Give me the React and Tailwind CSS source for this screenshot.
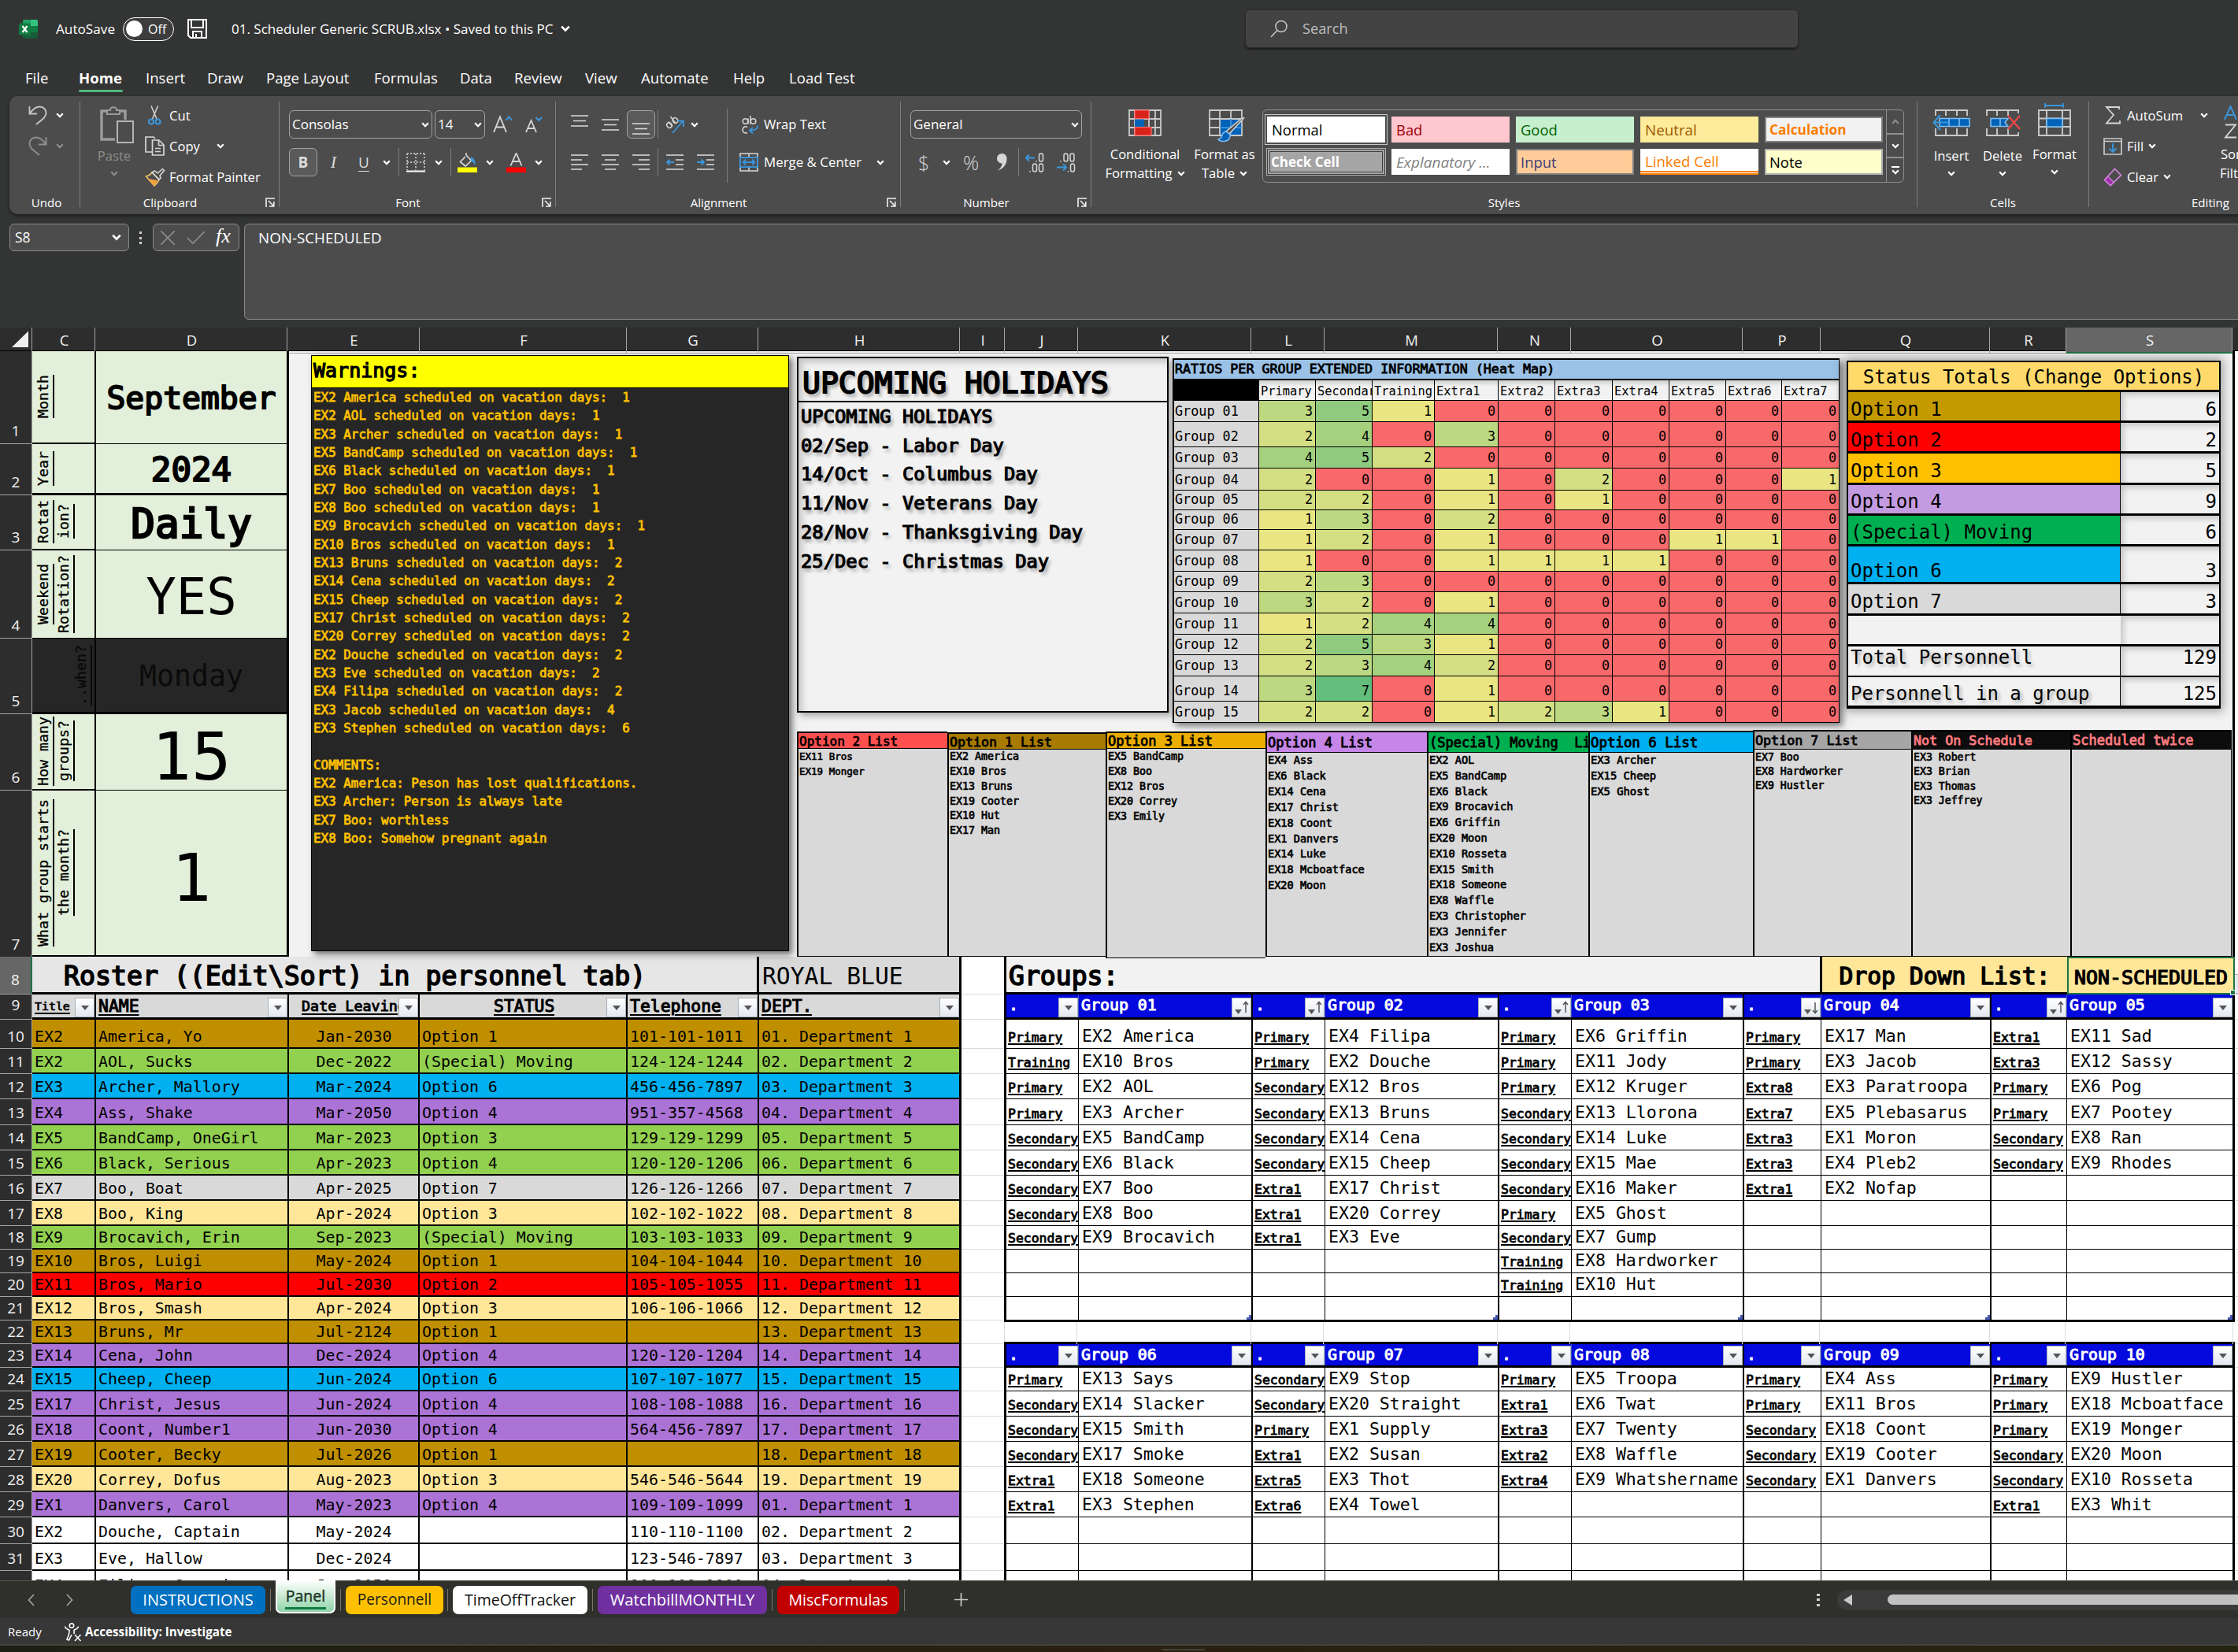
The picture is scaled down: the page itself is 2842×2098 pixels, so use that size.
import React from "react";

const UI = "font-['Open_Sans','Noto_Sans',sans-serif]";
const MONO = "font-['DejaVu_Sans_Mono','Liberation_Mono',monospace]";
/* A bold between the regular and bold weights of the sheet's font. */
const SEMI = "[-webkit-text-stroke-width:0.05em]";

/* ---------- icons ---------- */

const Chevron = ({ className = "" }) => (
  <svg className={`shrink-0 ${className}`} width="10" height="7" viewBox="0 0 10 7" fill="none" stroke="currentColor" strokeWidth="2.200">
    <path d="M1.2 1.2 5 5.2 8.8 1.2" />
  </svg>
);

const ExcelLogo = () => (
  <svg width="24" height="24" viewBox="0 0 24 24" className="shrink-0">
    <path d="M5 1.5A1.5 1.5 0 0 1 6.500 0H15v8H5z" fill="#21a366" />
    <path d="M15 0h7.500A1.500 1.500 0 0 1 24 1.500V8h-9z" fill="#33c481" />
    <path d="M15 8h9v8h-9z" fill="#107c41" />
    <path d="M5 8h10v8H5z" fill="#107c41" />
    <path d="M5 16h19v6.500a1.500 1.500 0 0 1-1.500 1.500h-16A1.500 1.500 0 0 1 5 22.500z" fill="#185c37" />
    <rect x="0" y="4.500" width="15" height="15" rx="1.500" fill="#107c41" />
    <path d="M4.500 8 10.500 16M10.500 8 4.500 16" stroke="#fff" strokeWidth="2.200" />
  </svg>
);

const SaveIcon = () => (
  <svg width="25" height="25" viewBox="0 0 25 25" fill="none" stroke="#fff" strokeWidth="2" className="shrink-0">
    <path d="M1 1h23v23H4l-3-3z" />
    <path d="M5 1v10h15V1M7 24v-8h11v8M11 24v-5" />
  </svg>
);

const SearchIcon = () => (
  <svg width="23" height="23" viewBox="0 0 23 23" fill="none" stroke="#c4c4c4" strokeWidth="1.6">
    <circle cx="14" cy="8.500" r="7" />
    <path d="M9 13.500 1 22" />
  </svg>
);

const UndoIcon = ({ flip }) => (
  <svg width="24" height="25" viewBox="0 0 24 25" fill="none" stroke="currentColor" strokeWidth="1.900" className={flip ? "-scale-x-100 shrink-0" : "shrink-0"}>
    <path d="M1.500 1v9.500H11M2 10C6 4 10 1.500 14.500 1.500c5 0 8 4 8 8 0 3-1.500 5-4 7.500L10 24" />
  </svg>
);

const PasteIcon = () => (
  <svg width="44" height="47" viewBox="0 0 44 47" fill="none" stroke="#9b9b9b" strokeWidth="2" className="-mr-[7px] shrink-0">
    <path d="M10 6H2v36h17" strokeWidth="3.500" />
    <path d="M24 6h8v11" strokeWidth="3.500" />
    <path d="M9 10V5h4c0-5 8-5 8 0h4v5z" />
    <rect x="22" y="19" width="20" height="27" stroke="#b4b4b4" />
  </svg>
);

const CutIcon = () => (
  <svg width="24" height="25" viewBox="0 0 24 25" fill="none" strokeWidth="1.500">
    <path d="M8 0.500 15 17M16.500 0.500 9.500 17" stroke="#d6d6d6" />
    <circle cx="8" cy="20.500" r="3" stroke="#3a96dd" strokeWidth="2" />
    <circle cx="16.500" cy="20.500" r="3" stroke="#3a96dd" strokeWidth="2" />
  </svg>
);

const CopyIcon = () => (
  <svg width="26" height="25" viewBox="0 0 26 25" fill="none" stroke="#d6d6d6" strokeWidth="1.700">
    <path d="M9 20H1V1h10l2 2" />
    <path d="M9.500 5H18l6 6v13H9.500zM17.500 5v6.500H24M13 15.500h7M13 19.500h7" />
  </svg>
);

const PainterIcon = () => (
  <svg width="26" height="24" viewBox="0 0 26 24" fill="none">
    <path d="m1.500 11 10.500 12c2-2 5-5 6-8l-9-9C7 9 4 10.500 1.500 11z" stroke="#f4c46c" strokeWidth="1.600" />
    <path d="m4 14 12 2c-1.500 3-3 5-4.500 6.500z" fill="#f2a33a" />
    <path d="m9 6 3.500-2 3.500 3L22.500 1.500 24.500 3.500 19 10l1 3-2 2z" stroke="#d6d6d6" strokeWidth="1.600" />
  </svg>
);

const Launcher = () => (
  <svg width="12" height="12" viewBox="0 0 12 12" fill="none" stroke="#f0f0f0" strokeWidth="1.600">
    <path d="M1 12V1h11M4 4l6 6M10.800 5v6H5" />
  </svg>
);

const GrowFont = ({ down }) => (
  <svg width={down ? 22 : 26} height="24" viewBox={down ? "0 0 22 24" : "0 0 26 24"} fill="none" className="shrink-0">
    {down ? (
      <>
        <path d="M1 22 7.500 7 14 22M3 17h9" stroke="#d6d6d6" strokeWidth="1.800" />
        <path d="m13.500 3 3.700 4 3.700-4" stroke="#3a96dd" strokeWidth="2" />
      </>
    ) : (
      <>
        <path d="M1 22 9 2.500 17 22M4 15.500h10" stroke="#d6d6d6" strokeWidth="1.900" />
        <path d="m16.500 6.500 3.700-4 3.700 4" stroke="#3a96dd" strokeWidth="2" />
      </>
    )}
  </svg>
);

const BordersIcon = () => (
  <svg width="24" height="25" viewBox="0 0 24 25" fill="none" className="shrink-0">
    <path d="M1 1h22M1 12h22M1 1v21M12 1v21M23 1v21" stroke="#d6d6d6" strokeWidth="1.500" strokeDasharray="2 2" />
    <path d="M0 23.500h24" stroke="#fff" strokeWidth="2" />
  </svg>
);

const FillIcon = () => (
  <svg width="26" height="25" viewBox="0 0 26 25" fill="none" className="shrink-0">
    <path d="M10 5 3.500 11.500 10 17l7.500-7L11 3V0" stroke="#d6d6d6" strokeWidth="1.700" />
    <path d="M17 5c4 2 6 5 5.500 11-1.500-2-2.500-4-5.500-6z" fill="#3a96dd" />
    <rect x="0" y="18.500" width="25" height="6.500" fill="#ffff00" />
  </svg>
);

const FontColorIcon = () => (
  <svg width="25" height="25" viewBox="0 0 25 25" fill="none" className="shrink-0">
    <path d="M5.500 16.500 12.500 0.500 19.500 16.500M8 11h9" stroke="#d6d6d6" strokeWidth="1.800" />
    <rect x="0" y="18.500" width="25" height="6.500" fill="#ff0000" />
  </svg>
);

const Lines = ({ d, h = 20, className = "" }) => (
  <svg width="22" height={h} viewBox={`0 0 22 ${h}`} fill="none" stroke="#dcdcdc" strokeWidth="1.700" className={`shrink-0 ${className}`}>
    <path d={d} />
  </svg>
);

const IndentIcon = ({ right }) => (
  <svg width="23" height="20" viewBox="0 0 23 20" fill="none" strokeWidth="1.700" className="shrink-0">
    <path d="M0 1h22M12 7h10M12 13h10M0 19h22" stroke="#dcdcdc" />
    <path d={right ? "M0 10h9M5.500 6.500 9 10l-3.500 3.500" : "M1 10h9M4.500 6.500 1 10l3.500 3.500"} stroke="#3a96dd" strokeWidth="1.900" />
  </svg>
);

const OrientIcon = () => (
  <svg width="24" height="24" viewBox="0 0 24 24" fill="none" className="shrink-0">
    <g stroke="#d6d6d6" strokeWidth="1.500">
      <ellipse cx="5" cy="13" rx="3" ry="3.500" transform="rotate(-40 5 13)" />
      <path d="m4 8.500 5 6" />
      <ellipse cx="12.500" cy="7" rx="3" ry="3.500" transform="rotate(-40 12.500 7)" />
      <path d="m6.500 2 6 8" />
    </g>
    <path d="M9 23 22 8M15.500 7.500H23V15" stroke="#3a96dd" strokeWidth="1.800" />
  </svg>
);

const WrapIcon = () => (
  <svg width="24" height="25" viewBox="0 0 24 25" fill="none" className="shrink-0" strokeWidth="1.600">
    <g stroke="#d6d6d6">
      <circle cx="7.500" cy="8" r="3.300" />
      <path d="M11 4.500v7M14 1v10.500" />
      <circle cx="17.500" cy="8" r="3.300" />
      <path d="M10 15.500c-3-2-6 .5-6 3.500s3 5 6 3.500" />
    </g>
    <path d="M23 13.500c0 4-2 6-9.500 6M17 16l-4 3.500 4 4" stroke="#3a96dd" strokeWidth="2" />
  </svg>
);

const MergeIcon = () => (
  <svg width="24" height="24" viewBox="0 0 24 24" fill="none" className="shrink-0">
    <path d="M1 1h22v22H1zM12 1v5M12 18v5" stroke="#d6d6d6" strokeWidth="1.600" />
    <rect x="1" y="6" width="22" height="12" fill="#4c4c4c" stroke="#3a96dd" strokeWidth="1.900" />
    <path d="M4.500 12h15M8 8.500 4.500 12 8 15.500M16 8.500l3.500 3.500-3.500 3.500" stroke="#3a96dd" strokeWidth="1.800" />
  </svg>
);

const Decimals = ({ more }) => (
  <svg width="25" height="25" viewBox="0 0 25 25" fill="none" className="shrink-0">
    <path d={more ? "M1 6.500h11M5 2.500 1 6.500l4 4" : "M0 18.500h12M8 14.500l4 4-4 4"} stroke="#3a96dd" strokeWidth="2" />
    <g stroke="#d6d6d6" strokeWidth="1.500">
      {more ? (
        <>
          <path d="M14 10v1.500" />
          <rect x="17.500" y="1" width="5" height="10" rx="2.500" />
          <path d="M6 23v1.500" />
          <rect x="9.500" y="14" width="5" height="10" rx="2.500" />
          <rect x="17.500" y="14" width="5" height="10" rx="2.500" />
        </>
      ) : (
        <>
          <path d="M5 10v1.500" />
          <rect x="9" y="1" width="5" height="10" rx="2.500" />
          <rect x="17" y="1" width="5" height="10" rx="2.500" />
          <path d="M14.500 23v1.500" />
          <rect x="17.500" y="14" width="5" height="10" rx="2.500" />
        </>
      )}
    </g>
  </svg>
);

const CondIcon = () => (
  <svg width="42" height="34" viewBox="0 0 42 34" fill="none">
    <path d="M1 1h40v32H1zM1 12h40M1 23h40M8 1v32M26 1v32M34 1v32" stroke="#c9c9c9" strokeWidth="1.800" />
    <rect x="8" y="1" width="18" height="10.500" fill="#d9221a" stroke="#ff6b6b" strokeWidth="1.200" />
    <rect x="8" y="12.500" width="12" height="9.500" fill="#0063b8" />
    <rect x="8" y="22.500" width="21" height="10.500" fill="#d9221a" stroke="#ff6b6b" strokeWidth="1.200" />
  </svg>
);

const TableIcon = () => (
  <svg width="46" height="42" viewBox="0 0 46 42" fill="none">
    <rect x="14" y="12" width="28" height="21" fill="#0063b8" />
    <path d="M1 1h41v32H1zM1 12h41M1 23h13M14 1v32M28 1v11" stroke="#c9c9c9" strokeWidth="1.800" />
    <path d="M14 23h28M28 12v21" stroke="#4aa0e6" strokeWidth="1.500" />
    <path d="M44.500 11 26 31l-4-3L42 11z" fill="#4c4c4c" stroke="#d6d6d6" strokeWidth="1.500" />
    <path d="M22 28c-7 1-3 8-10 10 3 4 16 4 15-6z" fill="#0063b8" stroke="#7dbdf0" strokeWidth="1.500" />
  </svg>
);

const CellsIcon = ({ kind }) => (
  <svg width="48" height="42" viewBox="0 0 48 42" fill="none">
    {kind === "insert" && (
      <>
        <path d="M4 16V9h40v7M4 32v9h40v-9M17 9v7M31 9v7M17 32v9M31 32v9" stroke="#c9c9c9" strokeWidth="1.900" />
        <path d="M9 19.500h38v10H9zM21 19.500v10M34 19.500v10" fill="#0063b8" stroke="#7dbdf0" strokeWidth="1.600" />
        <path d="M1.500 24.500H21M10 15l-8.500 9.500L10 34" stroke="#3a96dd" strokeWidth="2" />
      </>
    )}
    {kind === "delete" && (
      <>
        <path d="M4 16V9h40v4M4 32v9h40v-4M17 9v7M31 9v7M17 32v9M31 32v9" stroke="#c9c9c9" strokeWidth="1.900" />
        <path d="M9 19.500h22l-4 5 4 5H9zM21 19.500v10" fill="#0063b8" stroke="#7dbdf0" strokeWidth="1.600" />
        <path d="M31 16l15 17M46 16 31 33" stroke="#f04747" strokeWidth="2.200" />
      </>
    )}
    {kind === "format" && (
      <>
        <path d="M4 9h40v32H4zM4 19.500h40M4 30h40M14 9v32M34 9v32" stroke="#c9c9c9" strokeWidth="1.900" />
        <rect x="14" y="19.500" width="20" height="10.500" fill="#0063b8" stroke="#7dbdf0" strokeWidth="1.600" />
        <path d="M12 3h23M12 0v6M35 0v6" stroke="#3a96dd" strokeWidth="1.800" />
      </>
    )}
  </svg>
);

const SigmaIcon = () => (
  <svg width="24" height="23" viewBox="0 0 24 23" fill="none" stroke="#d6d6d6" strokeWidth="1.800">
    <path d="M20 4V1H4l9 10L4 21.500h17V18" />
  </svg>
);

const FillDownIcon = () => (
  <svg width="24" height="22" viewBox="0 0 24 22" fill="none">
    <path d="M1 1h22v20H1zM1 4.500h22" stroke="#c9c9c9" strokeWidth="1.700" />
    <path d="M12 7v11M7.500 13.500 12 18l4.500-4.500" stroke="#3a96dd" strokeWidth="1.900" />
  </svg>
);

const EraserIcon = () => (
  <svg width="24" height="24" viewBox="0 0 24 24" fill="none">
    <path d="M1.500 15.500 14.500 1.500l8 8L9 22.500z" stroke="#cf86d9" strokeWidth="1.700" />
    <path d="M1.500 15.500 6 11l7.500 7.500-4.500 4z" fill="#a030ad" stroke="#cf86d9" strokeWidth="1.200" />
  </svg>
);

const AccessIcon = () => (
  <svg width="24" height="24" viewBox="0 0 24 24" fill="none" stroke="#fff" strokeWidth="1.600">
    <circle cx="10" cy="3.500" r="2.700" />
    <path d="M1.500 4.500C2 8 6 8 7 9.500c.5 3-1 7-3 11.500l2.500 1L10 15M18.500 4.500c-.5 3.500-4.500 3.500-5.500 5V14" />
    <path d="m14 15 7.500 8M21.500 15 14 23" />
  </svg>
);

/* ---------- title bar and tabs ---------- */

const TitleBar = () => (
  <div className="flex h-[73px] items-center text-[17.2px] text-white">
    <div className="ml-6"><ExcelLogo /></div>
    <span className="ml-[23px] w-[85px]">AutoSave</span>
    <div className="flex h-[30px] w-[65px] items-center rounded-full border-[1.5px] border-white bg-[#3d3d3d]">
      <span className="ml-[3px] h-[21px] w-[21px] rounded-full bg-white" />
      <span className="ml-[7px] text-[16px]">Off</span>
    </div>
    <div className="ml-[17px]"><SaveIcon /></div>
    <span className="ml-[31px] whitespace-nowrap text-[17.050px]">01. Scheduler Generic SCRUB.xlsx • Saved to this PC</span>
    <Chevron className="ml-[10px] scale-125" />
    <div className="absolute left-[1581px] top-[12px] flex h-[49px] w-[703px] items-center rounded-md border border-[#2a2a2a] bg-[#434343] shadow-[0_2px_2px_#1f1f1f]">
      <span className="ml-[31px]"><SearchIcon /></span>
      <span className="ml-[18px] text-[18.2px] text-[#bdbdbd]">Search</span>
    </div>
  </div>
);

const MENU = [
  ["File", "w-[68px]"], ["Home", "w-[85px]"], ["Insert", "w-[78px]"], ["Draw", "w-[75px]"],
  ["Page Layout", "w-[137px]"], ["Formulas", "w-[109px]"], ["Data", "w-[69px]"], ["Review", "w-[90px]"],
  ["View", "w-[71px]"], ["Automate", "w-[117px]"], ["Help", "w-[71px]"], ["Load Test", "w-[100px]"],
];

const MenuBar = () => (
  <div className="flex h-[49px] pl-8 pt-[12px] text-[18.6px] leading-[28px] text-white">
    {MENU.map(([label, w]) => (
      <div key={label} className={`${w} shrink-0 whitespace-nowrap`}>
        {label === "Home" ? (
          <span className="flex w-[57px] flex-col font-bold">
            {label}
            <span className="mt-[1px] h-[3px] w-[56px] rounded bg-[#54b87c]" />
          </span>
        ) : (
          label
        )}
      </div>
    ))}
  </div>
);

/* ---------- ribbon ---------- */

const Group = ({ label, w, launcher, pad = "", children }) => (
  <>
    <div className={`${w} flex shrink-0 flex-col`}>
      <div className="flex h-[122px]">{children}</div>
      <div className={`flex h-[26px] items-center text-[15.1px] ${pad}`}>
        <span className={`flex-1 text-center ${launcher ? "-ml-[7px]" : ""}`}>{label}</span>
        {launcher && <span className="mr-[5px]"><Launcher /></span>}
      </div>
    </div>
    <div className="mt-[7px] h-[134px] w-px shrink-0 bg-[#7d7d7d]" />
  </>
);

const Sep = ({ className = "" }) => <div className={`h-[36px] w-px shrink-0 bg-[#7d7d7d] ${className}`} />;

const Combo = ({ text, w }) => (
  <div className={`${w} flex h-[36px] shrink-0 items-center justify-between rounded-[6px] border border-[#a3a3a3] pl-[3px] pr-[3px] text-[17px]`}>
    {text}
    <Chevron />
  </div>
);

const SWATCHES = [
  [
    ["Normal", "bg-white text-black pl-[6px] text-[18.4px] ring-2 ring-[#4c4c4c] outline outline-offset-[2px] outline-[#c8c8c8]"],
    ["Bad", "bg-[#ffc7ce] text-[#9c0006] pl-[6px] text-[18.4px]"],
    ["Good", "bg-[#c6efce] text-[#006100] pl-[6px] text-[18.4px]"],
    ["Neutral", "bg-[#ffeb9c] text-[#9c5700] pl-[6px] text-[18.800px]"],
    ["Calculation", "bg-[#f2f2f2] text-[#fa7d00] font-bold text-[17.3px] border-2 border-[#7f7f7f] pl-[4px]"],
  ],
  [
    ["Check Cell", "bg-[#a5a5a5] text-white font-bold text-[17px] border-4 border-double border-[#3f3f3f] pl-[1px] outline outline-[#b0b0b0]"],
    ["Explanatory ...", "bg-white text-[#7f7f7f] italic pl-[6px] text-[19px]"],
    ["Input", "bg-[#ffcc99] text-[#3f3f76] border-2 border-[#7f7f7f] pl-[4px] text-[18.4px]"],
    ["Linked Cell", "bg-white text-[#fa7d00] border-b-[5px] border-double border-[#ff8001] pl-[6px] pt-[3px] text-[18.600px]"],
    ["Note", "bg-[#ffffcc] text-black border-2 border-[#b2b2b2] pl-[4px] text-[18.4px]"],
  ],
];

const BigButton = ({ icon, lines, w, dim }) => (
  <div className={`${w} flex shrink-0 flex-col items-center text-[16.6px] ${dim ? "text-[#8c8c8c]" : ""}`}>
    {icon}
    {lines}
  </div>
);

const Ribbon = () => (
  <div className="ml-[12px] flex h-[150px] w-[2990px] rounded-[10px] bg-[#4c4c4c] text-[16.6px] leading-[24px] text-white shadow-[0_2px_4px_#1c1c1c]">
    <Group label="Undo" w="w-[89px]" pad="pl-[5px]">
      <div className="pl-6 pt-[5px]">
        <div className="flex h-[39px] items-center text-[#c4c4c4]"><UndoIcon /><Chevron className="ml-[11px] text-white" /></div>
        <div className="flex h-[39px] items-center text-[#8f8f8f]"><UndoIcon flip /><Chevron className="ml-[11px]" /></div>
      </div>
    </Group>
    <Group label="Clipboard" w="w-[252px]" launcher>
      <BigButton w="ml-[20px] w-[46px] pt-[13px]" dim icon={<PasteIcon />} lines={<><span className="mt-[4px]">Paste</span><Chevron className="mt-[7px]" /></>} />
      <div className="ml-[16px] pt-[5px]">
        <div className="flex h-[39px] items-center"><span className="w-[31px]"><CutIcon /></span>Cut</div>
        <div className="flex h-[39px] items-center"><span className="w-[31px]"><CopyIcon /></span><span className="w-[60px]">Copy</span><Chevron /></div>
        <div className="flex h-[39px] items-center whitespace-nowrap"><span className="w-[31px]"><PainterIcon /></span>Format Painter</div>
      </div>
    </Group>
    <Group label="Font" w="w-[350px]" launcher>
      <div className="flex flex-col gap-3 pl-3 pt-[18px]">
        <div className="flex h-[36px] items-center">
          <Combo text="Consolas" w="w-[182px]" />
          <span className="w-[3px]" />
          <Combo text="14" w="w-[64px]" />
          <span className="ml-[10px]"><GrowFont /></span>
          <span className="ml-[15px]"><GrowFont down /></span>
        </div>
        <div className="flex h-[36px] items-center">
          <span className="flex h-[36px] w-[36px] items-center justify-center rounded-[6px] border border-[#a3a3a3] bg-[#5a5a5a] text-[19px] font-bold text-[#dcdcdc]">B</span>
          <span className="w-[41px] text-center font-['Liberation_Serif',serif] text-[22px] italic text-[#dcdcdc]">I</span>
          <span className="w-[36px] text-center text-[19px] text-[#dcdcdc] underline underline-offset-4">U</span>
          <Chevron className="ml-[6px]" />
          <Sep className="ml-[10px]" />
          <span className="ml-[9px]"><BordersIcon /></span>
          <Chevron className="ml-[12px]" />
          <Sep className="ml-[10px]" />
          <span className="ml-[8px]"><FillIcon /></span>
          <Chevron className="ml-[10px]" />
          <span className="ml-[16px]"><FontColorIcon /></span>
          <Chevron className="ml-[11px]" />
        </div>
      </div>
    </Group>
    <Group label="Alignment" w="w-[437px]" launcher>
      <div className="flex w-[217px] flex-col gap-3 pl-[19px] pt-[18px]">
        <div className="flex h-[36px] items-center">
          <Lines h={15} className="-mt-[10px]" d="M0 1h22M3 7.500h16M0 14h22" />
          <Lines h={15} className="ml-[17px]" d="M0 1h22M3 7.500h16M0 14h22" />
          <span className="ml-[10px] flex h-[36px] w-[36px] items-end justify-center rounded-[6px] border border-[#a3a3a3] bg-[#5a5a5a] pb-[4px]">
            <Lines h={15} d="M0 1h22M3 7.500h16M0 14h22" />
          </span>
          <Sep className="ml-[3px]" />
          <span className="ml-[9px]"><OrientIcon /></span>
          <Chevron className="ml-[8px]" />
        </div>
        <div className="flex h-[36px] items-center">
          <Lines d="M0 1h22M0 7h14M0 13h22M0 19h14" />
          <Lines className="ml-[17px]" d="M0 1h22M4 7h14M0 13h22M4 19h14" />
          <Lines className="ml-[17px]" d="M0 1h22M8 7h14M0 13h22M8 19h14" />
          <Sep className="ml-[10px]" />
          <span className="ml-[10px]"><IndentIcon /></span>
          <span className="ml-[16px]"><IndentIcon right /></span>
        </div>
      </div>
      <div className="mt-[16px] h-[94px] w-px bg-[#7d7d7d]" />
      <div className="flex flex-col gap-3 pl-[15px] pt-[18px]">
        <div className="flex h-[36px] items-center"><WrapIcon /><span className="ml-[7px]">Wrap Text</span></div>
        <div className="flex h-[36px] items-center"><MergeIcon /><span className="ml-[7px] w-[143px] text-[16.900px]">Merge &amp; Center</span><Chevron /></div>
      </div>
    </Group>
    <Group label="Number" w="w-[241px]" launcher>
      <div className="flex flex-col gap-3 pl-3 pt-[18px]">
        <Combo text="General" w="w-[218px]" />
        <div className="flex h-[36px] items-center text-[#d6d6d6]">
          <span className="ml-[10px] w-[31px] text-[25px] font-light">$</span>
          <Chevron className="text-white" />
          <span className="ml-[16px] w-[43px] text-[25px] font-light">%</span>
          <svg width="13" height="22" viewBox="0 0 13 22" className="shrink-0"><path d="M6 0a6 6 0 0 1 6.500 6.500C12.500 14 8 19.500 1 21.500c3.500-3 5.500-6 5.500-9A6 6 0 0 1 6 0z" fill="#d6d6d6" /></svg>
          <Sep className="ml-[14px]" />
          <span className="ml-[8px]"><Decimals more /></span>
          <span className="ml-[15px]"><Decimals /></span>
        </div>
      </div>
    </Group>
    <Group label="Styles" w="w-[1048px]">
      <BigButton w="ml-[13px] w-[110px] pt-[17px]" icon={<CondIcon />} lines={<><span className="mt-[11px]">Conditional</span><span className="flex items-center gap-[6px]">Formatting<Chevron /></span></>} />
      <BigButton w="ml-[4px] w-[84px] pt-[17px]" icon={<span className="ml-[6px] h-[34px]"><TableIcon /></span>} lines={<><span className="mt-[11px] whitespace-nowrap">Format as</span><span className="flex items-center gap-[6px]">Table<Chevron /></span></>} />
      <div className="ml-[6px] mt-[17px] flex h-[93px] w-[815px] rounded-[6px] border border-[#8f8f8f]">
        <div className="flex flex-col gap-2 pl-[5px] pt-[8px]">
          {SWATCHES.map((row, i) => (
            <div key={i} className="flex gap-2">
              {row.map(([name, cls]) => (
                <div key={name} className={`flex h-[33px] w-[150px] items-center whitespace-nowrap ${cls}`}>{name}</div>
              ))}
            </div>
          ))}
        </div>
        <div className="ml-auto flex w-[22px] flex-col items-center border-l border-[#8f8f8f]">
          <span className="flex h-[31px] w-full items-center justify-center border-b-2 border-[#8f8f8f] text-[#8f8f8f]"><Chevron className="rotate-180" /></span>
          <span className="flex h-[30px] w-full items-center justify-center border-b-2 border-[#8f8f8f]"><Chevron /></span>
          <span className="flex h-[30px] w-full flex-col items-center justify-center gap-[2px]"><span className="h-[2px] w-[10px] bg-white" /><Chevron /></span>
        </div>
      </div>
    </Group>
    <Group label="Cells" w="w-[217px]">
      <BigButton w="ml-[13px] w-[60px] pt-[9px]" icon={<CellsIcon kind="insert" />} lines={<><span className="mt-[13px]">Insert</span><Chevron className="mt-[7px]" /></>} />
      <BigButton w="ml-[5px] w-[60px] pt-[9px]" icon={<CellsIcon kind="delete" />} lines={<><span className="mt-[13px]">Delete</span><Chevron className="mt-[7px]" /></>} />
      <BigButton w="ml-[6px] w-[60px] pt-[9px]" icon={<CellsIcon kind="format" />} lines={<><span className="mt-[11px]">Format</span><Chevron className="mt-[7px]" /></>} />
    </Group>
    <Group label="Editing" w="w-[308px]">
      <div className="w-[167px] pl-[18px] pt-[5px]">
        <div className="flex h-[39px] items-center"><span className="w-[30px]"><SigmaIcon /></span><span className="w-[93px]">AutoSum</span><Chevron /></div>
        <div className="flex h-[39px] items-center"><span className="w-[30px]"><FillDownIcon /></span>Fill<Chevron className="ml-[6px]" /></div>
        <div className="flex h-[39px] items-center"><span className="w-[30px]"><EraserIcon /></span>Clear<Chevron className="ml-[6px]" /></div>
      </div>
      <div className="flex flex-col whitespace-nowrap pt-[12px]">
        <svg width="24" height="44" viewBox="0 0 24 44" fill="none" className="ml-[4px]" strokeWidth="1.900">
          <path d="M1 18 8.500 1 16 18M4 12h9" stroke="#3a96dd" />
          <path d="M2 24.500h13L2 40.500h14" stroke="#d6d6d6" />
        </svg>
        <span className="mt-[6px]">Sort &amp;</span>
        <span className="-ml-px">Filter</span>
      </div>
    </Group>
  </div>
);

/* ---------- formula bar ---------- */

const FormulaBar = () => (
  <div className="flex h-[144px] pl-[12px] pt-[12px] text-[18.8px] text-white">
    <div className="flex h-[35px] w-[152px] shrink-0 items-center justify-between rounded-[6px] border border-[#8a8a8a] bg-[#4c4c4c] pl-[6px] pr-[10px] text-[17.5px]">
      S8
      <Chevron className="scale-125" />
    </div>
    <div className="ml-[13px] mt-[10px] flex h-[16px] shrink-0 flex-col justify-between">
      <span className="h-[3px] w-[3px] bg-[#d0d0d0]" /><span className="h-[3px] w-[3px] bg-[#d0d0d0]" /><span className="h-[3px] w-[3px] bg-[#d0d0d0]" />
    </div>
    <div className="ml-[14px] flex h-[35px] w-[110px] shrink-0 items-center rounded-[6px] border border-[#8a8a8a] bg-[#4c4c4c]">
      <svg width="18" height="18" viewBox="0 0 18 18" className="ml-[9px] shrink-0" stroke="#8c8c8c" strokeWidth="1.700"><path d="M0 0 18 18M18 0 0 18" /></svg>
      <svg width="24" height="17" viewBox="0 0 24 17" className="ml-[15px] shrink-0" fill="none" stroke="#8c8c8c" strokeWidth="1.700"><path d="M1 9l7 7L23 1" /></svg>
      <span className="ml-[13px] pb-1 font-['Liberation_Serif',serif] text-[26px] italic leading-none">fx</span>
    </div>
    <div className="ml-[6px] h-[122px] w-[2600px] shrink-0 rounded-[6px] border border-[#8a8a8a] bg-[#4c4c4c] pl-[17px] pt-[3px] leading-[28px]">NON-SCHEDULED</div>
  </div>
);

/* ---------- column headings ---------- */

const COLS = "CDEFGHIJKLMNOPQRS".split("");

const ColumnHeadings = () => (
  <div className="grid h-[29px] grid-cols-[41px_80px_244px_168px_263px_167px_256px_57px_93px_220px_93px_220px_93px_218px_99px_215px_97px_211px_7px] bg-[#2d2d2d] text-[18.5px] leading-[31px] text-[#f2f2f2]">
    <div className="border-b border-r border-[#a5a5a5]">
      <svg width="40" height="28" viewBox="0 0 40 28"><path d="M36 4.500V25H15z" fill="#f0f0f0" /></svg>
    </div>
    {COLS.map((c) => (
      <div key={c} className={`border-r pl-[2px] text-center ${c === "S" ? "border-b-2 border-[#a5a5a5] border-b-[#217346] bg-[#666666]" : "border-b border-[#a5a5a5]"}`}>{c}</div>
    ))}
    <div className="border-b border-[#a5a5a5]" />
  </div>
);

/* ---------- settings column (rows 1-7) ---------- */

const MINT = "bg-[#e2efda]";
const DARK = "bg-[#262626]";

const SETTINGS = [
  { n: 1, h: "h-[118px]", bg: MINT, label: ["Month"], value: "September", vc: `text-[39.7px] ${SEMI} pt-[3px] border-b`, lc: "border-b-2" },
  { n: 2, h: "h-[65px]", bg: MINT, label: ["Year"], value: "2024", vc: `text-[42.500px] ${SEMI} pt-[5px] border-b-[3px]`, lc: "border-b-[3px]" },
  { n: 3, h: "h-[70px]", bg: MINT, label: ["Rotat", "ion?"], value: "Daily", vc: `text-[51px] ${SEMI} pt-[4px] border-b`, lc: "border-b-2" },
  { n: 4, h: "h-[112px]", bg: MINT, label: ["Weekend", "Rotation?"], value: "YES", vc: "text-[64px] pt-[7px] border-b", lc: "border-b" },
  { n: 5, h: "h-[96px]", bg: DARK, label: ["..when?"], value: "Monday", vc: "text-[36.500px] pt-[4px] border-b-[3px] text-[#0b0b0b]", lc: "border-b-[3px] justify-end pr-[4px] text-[#080808]" },
  { n: 6, h: "h-[97px]", bg: MINT, label: ["How many", "groups?"], value: "15", vc: "text-[84px] pt-[12px] border-b", lc: "border-b-2" },
  { n: 7, h: "h-[212px]", bg: MINT, label: ["What group starts", "the month?"], value: "1", vc: "text-[84px] pt-[12px] border-b-[3px]", lc: "border-b-[3px]" },
];

const Settings = () => (
  <div className="w-[367px] shrink-0">
    {SETTINGS.map((s) => (
      <div key={s.n} className={`${s.h} flex`}>
        <div className={`flex w-[41px] items-end justify-center border-b border-r border-[#a5a5a5] bg-[#2d2d2d] pb-[6px] text-[19px] leading-none text-[#f2f2f2] ${UI}`}>{s.n}</div>
        <div className={`flex w-[81px] items-center overflow-hidden border-r-2 border-black pl-px ${s.bg} ${s.lc}`}>
          <div className="flex">
            {s.label.map((t) => (
              <div key={t} className="flex w-[26px] shrink-0 rotate-180 items-center justify-center whitespace-nowrap text-[18.3px] leading-[26px] underline decoration-[1.5px] underline-offset-[3px] [-webkit-text-stroke-width:0.3px] [writing-mode:vertical-rl]">{t}</div>
            ))}
          </div>
        </div>
        <div className={`flex w-[245px] items-center justify-center border-r-[3px] border-black leading-none ${s.bg} ${s.vc}`}>{s.value}</div>
      </div>
    ))}
  </div>
);

/* ---------- panels ---------- */

const WARNINGS = [
  "EX2 America scheduled on vacation days:  1", "EX2 AOL scheduled on vacation days:  1", "EX3 Archer scheduled on vacation days:  1",
  "EX5 BandCamp scheduled on vacation days:  1", "EX6 Black scheduled on vacation days:  1", "EX7 Boo scheduled on vacation days:  1",
  "EX8 Boo scheduled on vacation days:  1", "EX9 Brocavich scheduled on vacation days:  1", "EX10 Bros scheduled on vacation days:  1",
  "EX13 Bruns scheduled on vacation days:  2", "EX14 Cena scheduled on vacation days:  2", "EX15 Cheep scheduled on vacation days:  2",
  "EX17 Christ scheduled on vacation days:  2", "EX20 Correy scheduled on vacation days:  2", "EX2 Douche scheduled on vacation days:  2",
  "EX3 Eve scheduled on vacation days:  2", "EX4 Filipa scheduled on vacation days:  2", "EX3 Jacob scheduled on vacation days:  4",
  "EX3 Stephen scheduled on vacation days:  6", "", "COMMENTS:", "EX2 America: Peson has lost qualifications.",
  "EX3 Archer: Person is always late", "EX7 Boo: worthless", "EX8 Boo: Somehow pregnant again",
];

const Warnings = () => (
  <div className="ml-[28px] mt-[5px] h-[757px] w-[607px] shrink-0 border border-black bg-[#262626] shadow-[4px_4px_8px_rgba(0,0,0,0.55)]">
    <div className={`h-[41px] border-b border-black bg-[#ffff00] pl-[2px] pt-[1px] text-[25px] leading-[36px] ${SEMI}`}>Warnings:</div>
    <div className={`whitespace-pre pl-[2px] text-[15.9px] leading-[23.34px] text-[#ffc000] ${SEMI}`}>
      {WARNINGS.map((w, i) => (
        <div key={i} className="h-[23.34px]">{w}</div>
      ))}
    </div>
  </div>
);

const HOLIDAYS = ["UPCOMING HOLIDAYS", "02/Sep - Labor Day", "14/Oct - Columbus Day", "11/Nov - Veterans Day", "28/Nov - Thanksgiving Day", "25/Dec - Christmas Day"];

const Holidays = () => (
  <div className="mt-[7px] h-[452px] w-[472px] border-2 border-black bg-[#f2f2f2] shadow-[4px_4px_8px_rgba(0,0,0,0.3),inset_5px_5px_8px_rgba(0,0,0,0.18)]">
    <div className={`h-[56px] border-b-2 border-black pl-[5px] pt-[7px] text-[38px] leading-[48px] [text-shadow:3px_4px_4px_rgba(0,0,0,0.4)] ${SEMI}`}>UPCOMING HOLIDAYS</div>
    <div className={`pl-[3px] text-[23.8px] leading-[36.7px] [text-shadow:3px_4px_4px_rgba(0,0,0,0.4)] ${SEMI}`}>
      {HOLIDAYS.map((h) => (
        <div key={h}>{h}</div>
      ))}
    </div>
  </div>
);

const HEAT = { 0: "bg-[#f8696b]", 1: "bg-[#e9e583]", 2: "bg-[#d3df82]", 3: "bg-[#bcd881]", 4: "bg-[#a5d17f]", 5: "bg-[#8fca7e]", 7: "bg-[#63be7b]" };
const RATIOS = [
  ["h-[27px]", "3510000000"], ["h-[32px]", "2403000000"], ["h-[27px]", "4520000000"], ["h-[28px]", "2001020001"], ["h-[25px]", "2201010000"],
  ["h-[25px]", "1302000000"], ["h-[26px]", "1201000110"], ["h-[27px]", "1001111000"], ["h-[26px]", "2300000000"], ["h-[27px]", "3201000000"],
  ["h-[27px]", "1244000000"], ["h-[26px]", "2531000000"], ["h-[27px]", "2342000000"], ["h-[32px]", "3701000000"], ["h-[27px]", "2201231000"],
];
const RATIO_GRID = "grid grid-cols-[108px_72px_72px_79px_81px_72px_73px_72px_72px_71px_73px]";

const Ratios = () => (
  <div className="ml-[5px] mt-[9px] h-[463px] w-[847px] border-2 border-r-[1px] border-black bg-white shadow-[4px_4px_8px_rgba(0,0,0,0.5)]">
    <div className={`h-[26px] border-b-2 border-black bg-[#9bc2e6] pl-px text-[16.700px] leading-[23px] ${SEMI}`}>RATIOS PER GROUP EXTENDED INFORMATION (Heat Map)</div>
    <div className={`${RATIO_GRID} h-[26px] bg-[#f2f2f2] text-[15.4px] leading-[29px] shadow-[inset_0_4px_5px_rgba(0,0,0,0.15)]`}>
      <div className="bg-black" />
      {["Primary", "Secondary", "Training", "Extra1", "Extra2", "Extra3", "Extra4", "Extra5", "Extra6", "Extra7"].map((t) => (
        <div key={t} className="overflow-hidden border-b border-r border-black pl-[2px]">{t}</div>
      ))}
    </div>
    {RATIOS.map(([h, values], i) => (
      <div key={i} className={`${RATIO_GRID} ${h} text-[16.800px] leading-none`}>
        <div className="flex items-end border-b border-r border-black bg-[#d9d9d9] pb-[4px] pl-px">{`Group ${String(i + 1).padStart(2, "0")}`}</div>
        {values.split("").map((v, j) => (
          <div key={j} className={`flex items-end justify-end border-b border-r border-black pb-[4px] pr-[3px] ${HEAT[v]}`}>{v}</div>
        ))}
      </div>
    ))}
  </div>
);

const STATUS = [
  ["Option 1", 6, "h-[39px] pb-[2px]", "bg-[#c49a00]"],
  ["Option 2", 2, "h-[39px] pb-[2px]", "bg-[#ff0000]"],
  ["Option 3", 5, "h-[40px] pb-[3px]", "bg-[#ffc000]"],
  ["Option 4", 9, "h-[39px] pb-[3px]", "bg-[#c39be0]"],
  ["(Special) Moving", 6, "h-[39px] pb-[3px]", "bg-[#00b050]"],
  ["Option 6", 3, "h-[48px] pb-[2px]", "bg-[#00b0f0]"],
  ["Option 7", 3, "h-[40px] pb-[3px]", "bg-[#d9d9d9]"],
  ["", "", "h-[39px]", ""],
  ["Total Personnell", 129, "h-[39px] pb-[11px]", ""],
  ["Personnell in a group", 125, "h-[38px] pb-[3px]", ""],
];

const StatusTotals = () => (
  <div className="ml-[9px] mt-[12px] h-[442px] w-[475px] border-2 border-black bg-[#f2f2f2] text-[24px] leading-none shadow-[0_0_12px_3px_rgba(0,0,0,0.35)]">
    <div className="h-[38px] border-b-[3px] border-black bg-[#ffda6a] text-center leading-[39px]">Status Totals (Change Options)</div>
    {STATUS.map(([name, n, h, bg], i) => (
      <div key={i} className={`flex ${h.split(" ")[0]}`}>
        <div className={`flex w-[346px] items-end border-black pl-[3px] ${h.split(" ")[1] || ""} ${i > 7 ? "border-b-2 [text-shadow:3px_3px_4px_rgba(0,0,0,0.3)]" : "border-b-[3px]"} ${i === 7 ? "" : "border-r"} ${bg}`}>{name}</div>
        <div className={`flex flex-1 items-end justify-end border-black pr-[3px] shadow-[inset_4px_4px_7px_rgba(0,0,0,0.18)] ${h.split(" ")[1] || ""} ${i > 7 ? "border-b-2" : "border-b-[3px]"}`}>{n}</div>
      </div>
    ))}
  </div>
);

const LISTS = [
  { t: "Option 2 List", box: "w-[191px] mt-[2px] h-[286px]", head: "h-[20px] bg-[#ff5050] text-[16px] leading-[21px]", body: "text-[12.5px] leading-[19px] pt-[0px]", items: ["EX11 Bros", "EX19 Monger"] },
  { t: "Option 1 List", box: "w-[201px] mt-[3px] h-[285px]", head: "h-[20px] bg-[#a87b00] text-[16.6px] leading-[21px]", body: "text-[13.3px] leading-[18.85px]", items: ["EX2 America", "EX10 Bros", "EX13 Bruns", "EX19 Cooter", "EX10 Hut", "EX17 Man"] },
  { t: "Option 3 List", box: "w-[203px] mt-[2px] h-[288px]", head: "h-[20px] bg-[#ebae00] text-[17px] leading-[21px]", body: "text-[13.3px] leading-[19px]", items: ["EX5 BandCamp", "EX8 Boo", "EX12 Bros", "EX20 Correy", "EX3 Emily"] },
  { t: "Option 4 List", box: "w-[205px] mt-px h-[287px]", head: "h-[26px] bg-[#c586e8] text-[17px] leading-[27px]", body: "text-[13.6px] leading-[19.9px]", items: ["EX4 Ass", "EX6 Black", "EX14 Cena", "EX17 Christ", "EX18 Coont", "EX1 Danvers", "EX14 Luke", "EX18 Mcboatface", "EX20 Moon"] },
  { t: "(Special) Moving  List", box: "w-[205px] mt-px h-[287px]", head: "h-[26px] bg-[#00b050] text-[17px] leading-[27px]", body: "text-[13.6px] leading-[19.8px]", items: ["EX2 AOL", "EX5 BandCamp", "EX6 Black", "EX9 Brocavich", "EX6 Griffin", "EX20 Moon", "EX10 Rosseta", "EX15 Smith", "EX18 Someone", "EX8 Waffle", "EX3 Christopher", "EX3 Jennifer", "EX3 Joshua"] },
  { t: "Option 6 List", box: "w-[209px] mt-px h-[287px]", head: "h-[26px] bg-[#00b0f0] text-[17.4px] leading-[27px]", body: "text-[13.8px] leading-[19.9px]", items: ["EX3 Archer", "EX15 Cheep", "EX5 Ghost"] },
  { t: "Option 7 List", box: "w-[201px] h-[288px]", head: "h-[23px] bg-[#a6a6a6] text-[16.7px] leading-[22px]", body: "text-[13.2px] leading-[18.2px] pt-px", items: ["EX7 Boo", "EX8 Hardworker", "EX9 Hustler"] },
  { t: "Not On Schedule", box: "w-[202px] h-[288px]", head: "h-[23px] bg-[#0d0d0d] text-[#ff7c80] text-[16.7px] leading-[22px]", body: "text-[13.2px] leading-[18.3px] pt-px", items: ["EX3 Robert", "EX3 Brian", "EX3 Thomas", "EX3 Jeffrey"] },
  { t: "Scheduled twice", box: "w-[205px] h-[288px]", head: "h-[23px] bg-[#0d0d0d] text-[#ff7c80] text-[17px] leading-[22px]", body: "", items: [] },
];

const Lists = () => (
  <div className="flex h-[288px]">
    {LISTS.map((l) => (
      <div key={l.t} className={`${l.box} shrink-0 overflow-hidden whitespace-pre border-2 border-r-0 border-b border-black bg-[#d9d9d9] last:border-r`}>
        <div className={`${l.head} ${SEMI} overflow-hidden border-b border-black pl-px`}>{l.t}</div>
        <div className={`${l.body} ${SEMI} pl-px`}>
          {l.items.map((i) => (
            <div key={i}>{i}</div>
          ))}
        </div>
      </div>
    ))}
  </div>
);

/* ---------- rows 8 and below ---------- */

const ROW_H = [
  [10, "h-[37px]"], [11, "h-[32px]"], [12, "h-[32px]"], [13, "h-[33px]"], [14, "h-[32px]"], [15, "h-[32px]"], [16, "h-[32px]"], [17, "h-[32px]"],
  [18, "h-[30px]"], [19, "h-[30px]"], [20, "h-[30px]"], [21, "h-[30px]"], [22, "h-[30px]"], [23, "h-[30px]"], [24, "h-[30px]"], [25, "h-[32px]"],
  [26, "h-[32px]"], [27, "h-[32px]"], [28, "h-[32px]"], [29, "h-[32px]"], [30, "h-[34px]"], [31, "h-[34px]"], [32, "h-[34px]"],
];

const GOLD = "bg-[#bf8f00]", GREEN = "bg-[#92d050]", BLUE = "bg-[#00b0f0]", PURPLE = "bg-[#ab73d5]", GRAY = "bg-[#d9d9d9]", CREAM = "bg-[#ffe699]", RED = "bg-[#ff0000]", WHITE = "bg-white";

const ROSTER = [
  [GOLD, "EX2", "America, Yo", "Jan-2030", "Option 1", "101-101-1011", "01. Department 1"],
  [GREEN, "EX2", "AOL, Sucks", "Dec-2022", "(Special) Moving", "124-124-1244", "02. Department 2"],
  [BLUE, "EX3", "Archer, Mallory", "Mar-2024", "Option 6", "456-456-7897", "03. Department 3"],
  [PURPLE, "EX4", "Ass, Shake", "Mar-2050", "Option 4", "951-357-4568", "04. Department 4"],
  [GREEN, "EX5", "BandCamp, OneGirl", "Mar-2023", "Option 3", "129-129-1299", "05. Department 5"],
  [GREEN, "EX6", "Black, Serious", "Apr-2023", "Option 4", "120-120-1206", "06. Department 6"],
  [GRAY, "EX7", "Boo, Boat", "Apr-2025", "Option 7", "126-126-1266", "07. Department 7"],
  [CREAM, "EX8", "Boo, King", "Apr-2024", "Option 3", "102-102-1022", "08. Department 8"],
  [GREEN, "EX9", "Brocavich, Erin", "Sep-2023", "(Special) Moving", "103-103-1033", "09. Department 9"],
  [GOLD, "EX10", "Bros, Luigi", "May-2024", "Option 1", "104-104-1044", "10. Department 10"],
  [RED, "EX11", "Bros, Mario", "Jul-2030", "Option 2", "105-105-1055", "11. Department 11"],
  [CREAM, "EX12", "Bros, Smash", "Apr-2024", "Option 3", "106-106-1066", "12. Department 12"],
  [GOLD, "EX13", "Bruns, Mr", "Jul-2124", "Option 1", "", "13. Department 13"],
  [PURPLE, "EX14", "Cena, John", "Dec-2024", "Option 4", "120-120-1204", "14. Department 14"],
  [BLUE, "EX15", "Cheep, Cheep", "Jun-2024", "Option 6", "107-107-1077", "15. Department 15"],
  [PURPLE, "EX17", "Christ, Jesus", "Jun-2024", "Option 4", "108-108-1088", "16. Department 16"],
  [PURPLE, "EX18", "Coont, Number1", "Jun-2030", "Option 4", "564-456-7897", "17. Department 17"],
  [GOLD, "EX19", "Cooter, Becky", "Jul-2026", "Option 1", "", "18. Department 18"],
  [CREAM, "EX20", "Correy, Dofus", "Aug-2023", "Option 3", "546-546-5644", "19. Department 19"],
  [PURPLE, "EX1", "Danvers, Carol", "May-2023", "Option 4", "109-109-1099", "01. Department 1"],
  [WHITE, "EX2", "Douche, Captain", "May-2024", "", "110-110-1100", "02. Department 2"],
  [WHITE, "EX3", "Eve, Hallow", "Dec-2024", "", "123-546-7897", "03. Department 3"],
  [WHITE, "EX4", "Filipa, Gearni", "Jan-2050", "", "100-100-1000", "04. Department 4"],
];

const G1 = [
  ["Group 01", "none", "up", ["Primary|EX2 America", "Training|EX10 Bros", "Primary|EX2 AOL", "Primary|EX3 Archer", "Secondary|EX5 BandCamp", "Secondary|EX6 Black", "Secondary|EX7 Boo", "Secondary|EX8 Boo", "Secondary|EX9 Brocavich"]],
  ["Group 02", "up", "none", ["Primary|EX4 Filipa", "Primary|EX2 Douche", "Secondary|EX12 Bros", "Secondary|EX13 Bruns", "Secondary|EX14 Cena", "Secondary|EX15 Cheep", "Extra1|EX17 Christ", "Extra1|EX20 Correy", "Extra1|EX3 Eve"]],
  ["Group 03", "up", "none", ["Primary|EX6 Griffin", "Primary|EX11 Jody", "Primary|EX12 Kruger", "Secondary|EX13 Llorona", "Secondary|EX14 Luke", "Secondary|EX15 Mae", "Secondary|EX16 Maker", "Primary|EX5 Ghost", "Secondary|EX7 Gump", "Training|EX8 Hardworker", "Training|EX10 Hut"]],
  ["Group 04", "down", "none", ["Primary|EX17 Man", "Primary|EX3 Jacob", "Extra8|EX3 Paratroopa", "Extra7|EX5 Plebasarus", "Extra3|EX1 Moron", "Extra3|EX4 Pleb2", "Extra1|EX2 Nofap"]],
  ["Group 05", "up", "none", ["Extra1|EX11 Sad", "Extra3|EX12 Sassy", "Primary|EX6 Pog", "Primary|EX7 Pootey", "Secondary|EX8 Ran", "Secondary|EX9 Rhodes"]],
];
const G2 = [
  ["Group 06", "none", "none", ["Primary|EX13 Says", "Secondary|EX14 Slacker", "Secondary|EX15 Smith", "Secondary|EX17 Smoke", "Extra1|EX18 Someone", "Extra1|EX3 Stephen"]],
  ["Group 07", "none", "none", ["Secondary|EX9 Stop", "Secondary|EX20 Straight", "Primary|EX1 Supply", "Extra1|EX2 Susan", "Extra5|EX3 Thot", "Extra6|EX4 Towel"]],
  ["Group 08", "none", "none", ["Primary|EX5 Troopa", "Extra1|EX6 Twat", "Extra3|EX7 Twenty", "Extra2|EX8 Waffle", "Extra4|EX9 Whatshername"]],
  ["Group 09", "none", "none", ["Primary|EX4 Ass", "Primary|EX11 Bros", "Secondary|EX18 Coont", "Secondary|EX19 Cooter", "Secondary|EX1 Danvers"]],
  ["Group 10", "none", "none", ["Primary|EX9 Hustler", "Primary|EX18 Mcboatface", "Primary|EX19 Monger", "Secondary|EX20 Moon", "Secondary|EX10 Rosseta", "Extra1|EX3 Whit"]],
];

const Filter = ({ sort = "none" }) => (
  <span className="ml-auto flex h-[25px] w-[25px] shrink-0 items-center justify-center self-end border border-[#a9b0ba] bg-gradient-to-b from-white to-[#e3e8ef]">
    {sort === "none" ? (
      <svg width="10" height="6"><path d="M0 0h10L5 6z" fill="#555" /></svg>
    ) : (
      <svg width="20" height="18" viewBox="0 0 20 18" fill="none">
        <path d="M1 11h9l-4.500 6z" fill="#555" />
        <path d={sort === "up" ? "M15 15V2M12 5l3-3.500L18 5" : "M15 2v13M12 12l3 3.500 3-3.500"} stroke="#555" strokeWidth="1.500" />
      </svg>
    )}
  </span>
);

const ROSTER_GRID = "grid grid-cols-[81px_245px_166px_264px_167px_257px]";
const HEADS = [
  ["Title", "text-[14.9px] pb-[6px]", ""],
  ["NAME", "text-[21.4px] pb-[4px]", ""],
  ["Date Leaving", "text-[18.4px] pb-[5px]", "pl-[13px]"],
  ["STATUS", "text-[21.4px] pb-[4px]", "pl-[91px]"],
  ["Telephone", "text-[21.4px] pb-[4px]", ""],
  ["DEPT.", "text-[21.4px] pb-[4px]", ""],
];

const RowNumbers = () => (
  <div className={`w-[41px] shrink-0 text-[19px] leading-none text-[#f2f2f2] ${UI}`}>
    <div className="flex h-[48px] items-end justify-center border-b border-r-2 border-[#a5a5a5] border-r-[#217346] bg-[#666666] pb-[8px]">8</div>
    <div className="flex h-[32px] items-end justify-center border-b border-r border-[#a5a5a5] bg-[#2d2d2d] pb-[8px]">9</div>
    {ROW_H.map(([n, h]) => (
      <div key={n} className={`${h} flex items-end justify-center border-b border-r border-[#a5a5a5] bg-[#2d2d2d] pb-[5px]`}>{n}</div>
    ))}
  </div>
);

const Roster = () => (
  <div className="w-[1180px] shrink-0 leading-none">
    <div className="flex h-[48px]">
      <div className={`flex w-[923px] items-end border-b-[3px] border-r-[3px] border-black bg-[#e7e6e6] pb-[4px] pl-[40px] text-[33.200px] ${SEMI}`}>Roster ((Edit\Sort) in personnel tab)</div>
      <div className="flex w-[257px] items-end border-b-[3px] border-r-[3px] border-black bg-[#d9d9d9] pb-[5px] pl-[4px] text-[29.700px]">ROYAL BLUE</div>
    </div>
    <div className={`${ROSTER_GRID} h-[32px]`}>
      {HEADS.map(([t, cls, pad]) => (
        <div key={t} className={`flex items-end overflow-hidden border-b-[3px] border-r-2 border-black bg-[#d9d9d9] last:border-r-[3px] ${pad}`}>
          <span className={`min-w-0 overflow-hidden whitespace-nowrap pl-[3px] pt-1 underline decoration-2 underline-offset-[3px] ${cls} ${SEMI}`}>{t}</span>
          <Filter />
        </div>
      ))}
    </div>
    {ROSTER.map(([bg, ...cells], i) => (
      <div key={i} className={`${ROSTER_GRID} ${ROW_H[i][1]} text-[19.900px]`}>
        {cells.map((c, j) => (
          <div key={j} className={`flex items-end overflow-hidden whitespace-nowrap border-b-2 border-r-2 border-black pb-[3px] last:border-r-[3px] ${j === 2 ? "justify-center pl-px" : "pl-[3px]"} ${bg}`}>{c}</div>
        ))}
      </div>
    ))}
  </div>
);

const GapColumn = () => (
  <div className="w-[54px] shrink-0 bg-white">
    <div className="h-[48px] border-b border-[#dcdcdc]" />
    <div className="h-[32px] border-b border-[#dcdcdc]" />
    {ROW_H.map(([n, h]) => (
      <div key={n} className={`${h} border-b border-[#dcdcdc]`} />
    ))}
  </div>
);

const GROUP_GRID = "grid grid-cols-[92px_221px_92px_221px_92px_219px_98px_216px_96px_213px]";

const GroupBlock = ({ groups, rows, top, textPad, close }) => (
  <div className={`border-l-[3px] border-black ${close ? "border-b-2" : ""}`}>
    <div className={`${GROUP_GRID} ${top} border-b-[3px] border-black bg-[#0409dd] text-[19.900px] text-white ${SEMI}`}>
      {groups.map(([name, a, b]) => (
        <React.Fragment key={name}>
          <div className="flex items-end border-r border-[#3f58b8] pl-[3px]"><span className={textPad}>.</span><Filter sort={a} /></div>
          <div className="flex items-end border-r-2 border-black pl-[3px] last:border-r-[3px]"><span className={textPad}>{name}</span><Filter sort={b} /></div>
        </React.Fragment>
      ))}
    </div>
    {rows.map(([n, h], i) => (
      <div key={n} className={`${GROUP_GRID} ${h}`}>
        {groups.map(([name, , , people]) => {
          const [role = "", who = ""] = (people[i] || "").split("|");
          return (
            <React.Fragment key={name}>
              <div className={`flex items-end overflow-hidden border-b border-r border-black bg-white pb-[5px] pl-[2px] text-[16.450px] ${SEMI}`}>
                <span className="underline decoration-2 underline-offset-[2px]">{role}</span>
              </div>
              <div className="relative flex items-end overflow-hidden whitespace-nowrap border-b border-r-2 border-black bg-white pb-[4px] pl-[4px] text-[21.550px] last:border-r-[3px]">
                {who}
                {close && i === rows.length - 1 && <span className="absolute bottom-0 right-0 h-[6px] w-[6px] bg-[#4557b0] [clip-path:polygon(50%_0,100%_0,100%_100%,0_100%,0_50%,50%_50%)]" />}
              </div>
            </React.Fragment>
          );
        })}
      </div>
    ))}
  </div>
);

const Groups = () => (
  <div className="w-[1563px] shrink-0 leading-none">
    <div className="flex h-[48px]">
      <div className={`flex w-[1036px] items-end border-b-[3px] border-l-[3px] border-black bg-[#f2f2f2] pb-[4px] pl-[3px] text-[33.100px] ${SEMI}`}>Groups:</div>
      <div className={`flex w-[314px] items-end justify-center border-b-[3px] border-l-[3px] border-black bg-[#ffe699] pb-[5px] text-[29.700px] ${SEMI}`}>Drop Down List:</div>
      <div className={`relative flex flex-1 items-end justify-center border-2 border-[#217346] bg-[#ffe699] pb-[6px] text-[24.900px] ${SEMI}`}>
        NON-SCHEDULED
        <span className="absolute -bottom-[3px] -right-[3px] h-[7px] w-[7px] border border-white bg-[#217346]" />
      </div>
    </div>
    <GroupBlock groups={G1} rows={ROW_H.slice(0, 12)} top="h-[32px]" textPad="pb-[5px]" close />
    <div className={`${GROUP_GRID} h-[28px] border-l border-[#dcdcdc] bg-white`}>
      {COLS.slice(7).map((c) => (
        <div key={c} className="border-r border-[#dcdcdc]" />
      ))}
    </div>
    <GroupBlock groups={G2} rows={ROW_H.slice(14)} top="h-[33px] border-t-[3px] -mt-[3px]" textPad="pb-[3px]" />
  </div>
);

const TailColumn = () => (
  <div className="flex-1 bg-white">
    <div className="flex h-[48px] items-end border-b border-[#dcdcdc]"><span className="h-[25px] w-[4px] border-y border-[#a9b0ba] bg-[#e3e8ef]" /></div>
    <div className="h-[32px] border-b border-[#dcdcdc]" />
    {ROW_H.map(([n, h]) => (
      <div key={n} className={`${h} border-b border-[#dcdcdc]`} />
    ))}
  </div>
);

/* ---------- bottom bars ---------- */

const TabSep = ({ className = "" }) => <span className={`h-[28px] w-px shrink-0 bg-[#77756f] ${className}`} />;

const SheetTab = ({ name, cls }) => (
  <div className={`flex h-[36px] shrink-0 items-center justify-center rounded-[7px] ${cls}`}>{name}</div>
);

const SheetTabs = () => (
  <div className="relative flex h-[48px] items-center border-t border-[#55534e] bg-[#2f2f2b] text-[19.100px] text-white">
    <svg width="60" height="16" viewBox="0 0 60 16" className="ml-[35px] shrink-0" fill="none" stroke="#9a9a9a" strokeWidth="1.800"><path d="M8 1 1.500 8 8 15M50 1l6.500 7L50 15" /></svg>
    <SheetTab name="INSTRUCTIONS" cls="ml-[71px] w-[171px] bg-[#0070c0] text-[20px]" />
    <TabSep className="ml-[6px]" />
    <div className="ml-[6px] flex h-[42px] w-[76px] shrink-0 -translate-y-[4px] flex-col items-center rounded-b-[7px] border-2 border-t-0 border-white bg-gradient-to-b from-white to-[#8fd3a8] pt-[6px] text-[19.500px] leading-[28px] text-[#1e3a2a] [-webkit-text-stroke:0.5px_#1e3a2a]">
      Panel
      <span className="h-[3px] w-[52px] bg-[#107c41]" />
    </div>
    <TabSep className="ml-[6px]" />
    <SheetTab name="Personnell" cls="ml-[6px] w-[124px] bg-[#ffc000] text-[#1c1c1c]" />
    <TabSep className="ml-[5px]" />
    <SheetTab name="TimeOffTracker" cls="ml-[6px] w-[171px] bg-white text-[#111] text-[19.500px]" />
    <TabSep className="ml-[6px]" />
    <SheetTab name="WatchbillMONTHLY" cls="ml-[6px] w-[215px] bg-[#7030a0] text-[20.200px]" />
    <TabSep className="ml-[6px]" />
    <SheetTab name="MiscFormulas" cls="ml-[6px] w-[155px] bg-[#c00000] text-[19.500px]" />
    <TabSep className="ml-[6px]" />
    <svg width="17" height="17" viewBox="0 0 17 17" className="ml-[63px] shrink-0" stroke="#c8c8c8" strokeWidth="1.700"><path d="M8.500 0v17M0 8.500h17" /></svg>
    <div className="ml-auto flex h-[16px] flex-col justify-between">
      <span className="h-[3px] w-[4px] bg-[#d0d0d0]" /><span className="h-[3px] w-[4px] bg-[#d0d0d0]" /><span className="h-[3px] w-[4px] bg-[#d0d0d0]" />
    </div>
    <div className="ml-[22px] flex h-[26px] w-[509px] shrink-0 items-center rounded-l-full bg-[#3b3b3b]">
      <svg width="11" height="14" className="ml-[8px]"><path d="M11 0v14L0 7z" fill="#c8c8c8" /></svg>
      <span className="ml-[45px] h-[13px] flex-1 rounded-l-full bg-[#c2c2c2]" />
    </div>
  </div>
);

const StatusBar = () => (
  <>
    <div className="flex h-[33px] items-center bg-[#373737] pt-[2px] text-[15px] text-white">
      <span className="ml-[10px] w-[71px]">Ready</span>
      <AccessIcon />
      <span className="ml-[3px] text-[15.200px] font-bold">Accessibility: Investigate</span>
    </div>
    <div className="flex h-[10px] justify-center border-t-2 border-[#44433a] bg-gradient-to-r from-[#1e1f14] via-[#2a1f10] to-[#25240f]">
      <span className="mr-[-162px] mt-[4px] h-[2px] w-[55px] rounded bg-[#45433a]" />
    </div>
  </>
);

export default function App() {
  return (
    <div className={`relative h-[2098px] w-[2842px] overflow-hidden bg-[#333434] ${UI}`}>
      <TitleBar />
      <MenuBar />
      <Ribbon />
      <FormulaBar />
      <ColumnHeadings />
      <div className={`h-[1562px] overflow-hidden text-black ${MONO}`}>
        <div className="flex h-[770px] border-t border-black bg-[#f2f2f2]">
          <Settings />
          <div className="relative z-10 flex w-[2471px] shrink-0 border-r-[3px] border-black">
            <Warnings />
            <div className="ml-[10px]">
              <div className="flex h-[481px] items-start">
                <Holidays />
                <Ratios />
                <StatusTotals />
              </div>
              <Lists />
            </div>
          </div>
          <div className="flex-1 bg-white" />
        </div>
        <div className="flex">
          <RowNumbers />
          <Roster />
          <GapColumn />
          <Groups />
          <TailColumn />
        </div>
      </div>
      <SheetTabs />
      <StatusBar />
    </div>
  );
}
